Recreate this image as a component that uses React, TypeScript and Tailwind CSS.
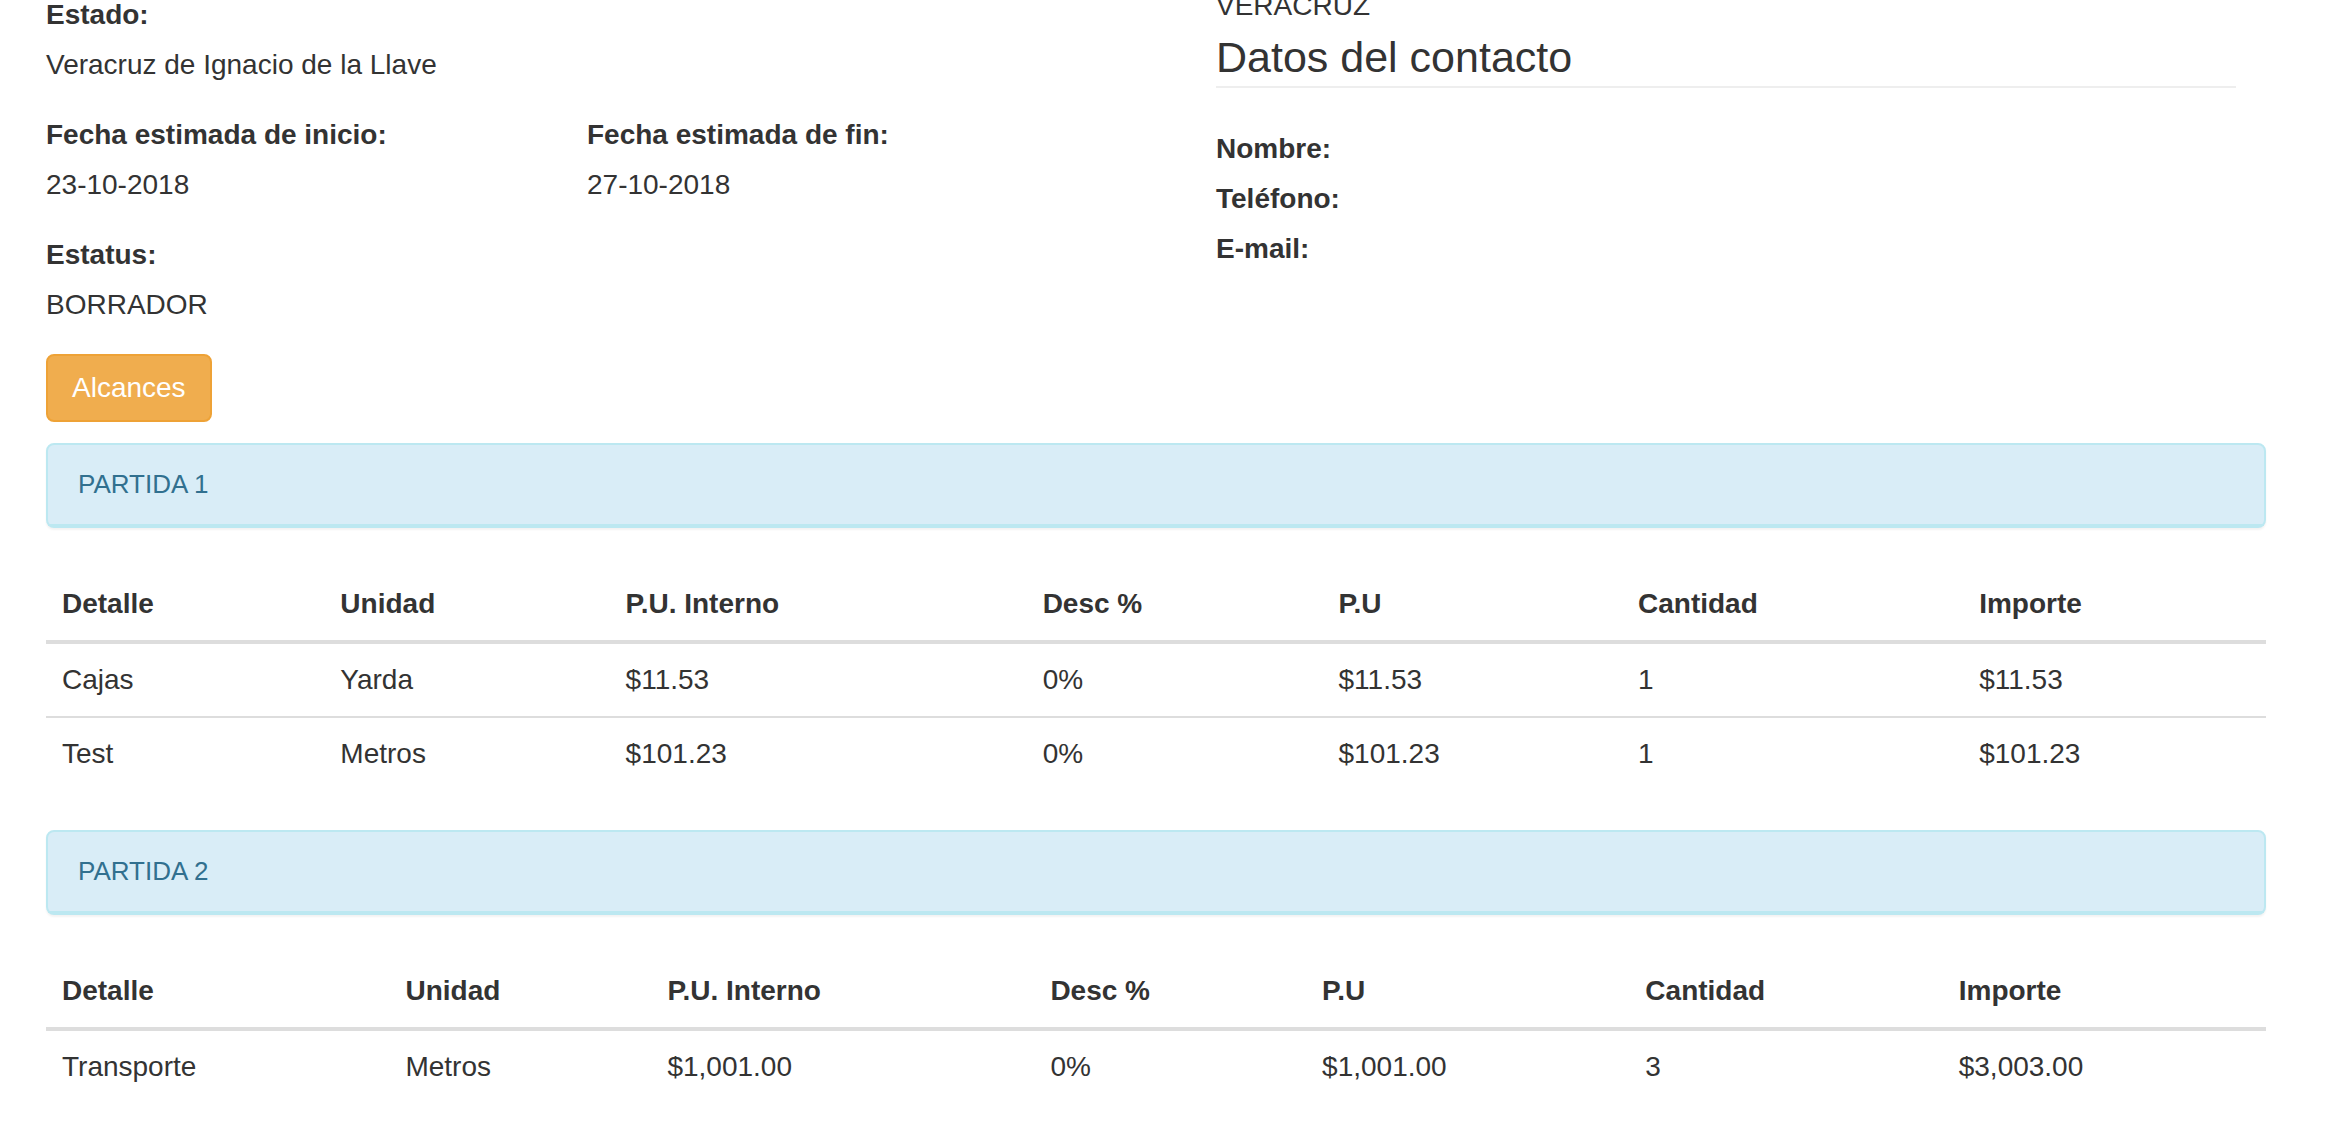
import React from 'react';

interface Row {
  detalle: string;
  unidad: string;
  puInterno: string;
  desc: string;
  pu: string;
  cantidad: string;
  importe: string;
}

interface Partida {
  title: string;
  rows: Row[];
}

const partidas: Partida[] = [
  {
    title: 'PARTIDA 1',
    rows: [
      { detalle: 'Cajas', unidad: 'Yarda', puInterno: '$11.53', desc: '0%', pu: '$11.53', cantidad: '1', importe: '$11.53' },
      { detalle: 'Test', unidad: 'Metros', puInterno: '$101.23', desc: '0%', pu: '$101.23', cantidad: '1', importe: '$101.23' },
    ],
  },
  {
    title: 'PARTIDA 2',
    rows: [
      { detalle: 'Transporte', unidad: 'Metros', puInterno: '$1,001.00', desc: '0%', pu: '$1,001.00', cantidad: '3', importe: '$3,003.00' },
    ],
  },
];

const headers = ['Detalle', 'Unidad', 'P.U. Interno', 'Desc %', 'P.U', 'Cantidad', 'Importe'];

function Field({ label, value, className = '' }: { label: string; value: string; className?: string }) {
  return (
    <div className={className}>
      <div className="font-bold mb-[10px]">{label}</div>
      <div>{value}</div>
    </div>
  );
}

function PartidaTable({ partida }: { partida: Partida }) {
  return (
    <div>
      <div className="border-2 border-[#bce8f1] rounded-[8px] bg-[#d9edf7] shadow-[0_2px_2px_rgba(0,0,0,0.05)]">
        <div className="px-[30px] py-[20px] border-b-2 border-[#bce8f1] text-[#31708f] text-[26px] leading-[39px]">
          {partida.title}
        </div>
      </div>

      <table className="w-full mt-[40px] mb-[40px] border-separate border-spacing-0">
        <thead>
          <tr>
            {headers.map((h) => (
              <th key={h} className="text-left font-bold p-[16px] border-b-4 border-[#ddd]">
                {h}
              </th>
            ))}
          </tr>
        </thead>
        <tbody>
          {partida.rows.map((r, i) => {
            const cell = i > 0 ? 'p-[16px] border-t-2 border-[#ddd]' : 'p-[16px]';
            return (
              <tr key={r.detalle}>
                <td className={cell}>{r.detalle}</td>
                <td className={cell}>{r.unidad}</td>
                <td className={cell}>{r.puInterno}</td>
                <td className={cell}>{r.desc}</td>
                <td className={cell}>{r.pu}</td>
                <td className={cell}>{r.cantidad}</td>
                <td className={cell}>{r.importe}</td>
              </tr>
            );
          })}
        </tbody>
      </table>
    </div>
  );
}

export default function App() {
  return (
    <div className="min-h-screen bg-white text-[#333] font-['Liberation_Sans',Arial,sans-serif] text-[28px] leading-[40px] overflow-hidden">
      <div className="pl-[46px] pr-[62px]">
        {/* top info */}
        <div className="flex items-start">
          <div className="w-[1170px] shrink-0 -mt-[5px]">
            <div className="grid grid-cols-[541px_1fr] gap-y-[30px]">
              <Field className="col-span-2" label="Estado:" value="Veracruz de Ignacio de la Llave" />
              <Field label="Fecha estimada de inicio:" value="23-10-2018" />
              <Field label="Fecha estimada de fin:" value="27-10-2018" />
              <Field className="col-span-2" label="Estatus:" value="BORRADOR" />
            </div>
            <button className="mt-[29px] px-[24px] py-[12px] border-2 border-[#eea236] bg-[#f0ad4e] text-white rounded-[8px] leading-[40px]">
              Alcances
            </button>
          </div>

          <div className="w-[1020px] -mt-[14px]">
            <div>VERACRUZ</div>
            <h3 className="mt-[8px] text-[43px] leading-[47px] pb-[5px] border-b-2 border-[#eee]">
              Datos del contacto
            </h3>
            <div className="mt-[41px]">
              <div className="font-bold mb-[10px]">Nombre:</div>
              <div className="font-bold mb-[10px]">Teléfono:</div>
              <div className="font-bold mb-[10px]">E-mail:</div>
            </div>
          </div>
        </div>

        {/* partidas */}
        <div className="mt-[21px]">
          {partidas.map((p) => (
            <PartidaTable key={p.title} partida={p} />
          ))}
        </div>
      </div>
    </div>
  );
}
